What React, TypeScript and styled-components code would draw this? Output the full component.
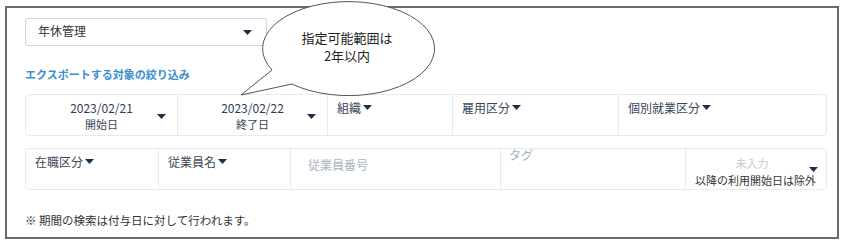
import styled, { createGlobalStyle } from "styled-components";

const GlobalStyle = createGlobalStyle`
  html, body {
    margin: 0;
    padding: 0;
    background: #ffffff;
  }
  body {
    font-family: "Noto Sans CJK JP", "Noto Sans", sans-serif;
    color: #333333;
  }
`;

function Caret() {
  return (
    <svg width="9" height="5" viewBox="0 0 9 5">
      <path d="M0 0 H9 L4.5 5 Z" fill="#1e2e48" />
    </svg>
  );
}

const firstRow = [
  { kind: "date", value: "2023/02/21", caption: "開始日" },
  { kind: "date", value: "2023/02/22", caption: "終了日" },
  { kind: "menu", label: "組織" },
  { kind: "menu", label: "雇用区分" },
  { kind: "menu", label: "個別就業区分" },
];

export default function App() {
  return (
    <>
      <GlobalStyle />
      <Frame>
        <Select>
          <span>年休管理</span>
          <Caret />
        </Select>

        <SectionTitle>エクスポートする対象の絞り込み</SectionTitle>

        <FilterRow $columns="151px 150px 125px 166px 1fr">
          {firstRow.map((cell, i) =>
            cell.kind === "date" ? (
              <DateCell key={i}>
                <DateText>
                  <DateValue>{cell.value}</DateValue>
                  <DateCaption>{cell.caption}</DateCaption>
                </DateText>
                <CaretSlot>
                  <Caret />
                </CaretSlot>
              </DateCell>
            ) : (
              <Cell key={i}>
                <MenuLabel>
                  {cell.label}
                  <Caret />
                </MenuLabel>
              </Cell>
            )
          )}
        </FilterRow>

        <FilterRow $columns="132px 132px 210px 185px 1fr">
          <Cell>
            <MenuLabel>
              在職区分
              <Caret />
            </MenuLabel>
          </Cell>
          <Cell>
            <MenuLabel>
              従業員名
              <Caret />
            </MenuLabel>
          </Cell>
          <InputCell>
            <Placeholder>従業員番号</Placeholder>
          </InputCell>
          <TagCell>
            <Placeholder>タグ</Placeholder>
          </TagCell>
          <UsageCell>
            <UsagePlaceholder>未入力</UsagePlaceholder>
            <UsageCaret>
              <Caret />
            </UsageCaret>
            <UsageNote>以降の利用開始日は除外</UsageNote>
          </UsageCell>
        </FilterRow>

        <Footnote>※ 期間の検索は付与日に対して行われます。</Footnote>

        <Callout>
          <svg width="210" height="100" viewBox="0 0 210 100">
            <path
              d="M37 70 L6 95 L57 84 A86 47 0 1 0 37 70 Z"
              fill="#ffffff"
              stroke="#555555"
              strokeWidth="1"
            />
          </svg>
          <CalloutText>
            <span>指定可能範囲は</span>
            <span>2年以内</span>
          </CalloutText>
        </Callout>
      </Frame>
    </>
  );
}

const Frame = styled.div`
  position: relative;
  box-sizing: border-box;
  width: 834px;
  height: 233px;
  margin: 6px 0 0 5px;
  padding: 10px 10px 0 18px;
  border: 2px solid #6a6a6a;
  display: flex;
  flex-direction: column;
`;

const Select = styled.div`
  box-sizing: border-box;
  width: 242px;
  height: 28px;
  padding: 0 14px 0 12px;
  border: 1px solid #c8d5e2;
  border-radius: 3px;
  display: flex;
  align-items: center;
  justify-content: space-between;
  font-size: 12px;
  line-height: 16px;
  color: #333333;

  span {
    margin-top: -2px;
  }
`;

const SectionTitle = styled.div`
  margin-top: 20px;
  font-size: 11px;
  line-height: 16px;
  font-weight: 700;
  color: #3b8fcf;
`;

const FilterRow = styled.div<{ $columns: string }>`
  box-sizing: border-box;
  margin-top: 12px;
  height: 42px;
  display: grid;
  grid-template-columns: ${(p) => p.$columns};
  border: 1px solid #e6ebf0;
  border-radius: 4px;
`;

const Cell = styled.div`
  box-sizing: border-box;
  padding: 5px 9px 0;
  border-left: 1px solid #e6ebf0;

  &:first-child {
    border-left: none;
  }
`;

const MenuLabel = styled.div`
  display: flex;
  align-items: center;
  gap: 2px;
  font-size: 12px;
  line-height: 16px;
  color: #3a4657;

  svg {
    margin-top: -2px;
  }
`;

const DateCell = styled(Cell)`
  display: flex;
  align-items: center;
  padding: 0 0 0 20px;
`;

const DateText = styled.div`
  flex: 1;
  display: flex;
  flex-direction: column;
  align-items: center;
  padding-top: 1px;
`;

const DateValue = styled.span`
  font-size: 12px;
  line-height: 16px;
  color: #2e3d52;
`;

const DateCaption = styled.span`
  font-size: 11px;
  line-height: 16px;
  color: #3a4657;
`;

const CaretSlot = styled.div`
  width: 20px;
  display: flex;
  justify-content: flex-start;
  padding-top: 2px;
`;

const InputCell = styled(Cell)`
  padding: 8px 17px 0;
`;

const TagCell = styled(Cell)`
  padding: 0 8px;

  div {
    line-height: 12px;
  }
`;

const Placeholder = styled.div`
  font-size: 12px;
  line-height: 16px;
  color: #a8b2be;
`;

const UsageCell = styled(Cell)`
  display: grid;
  grid-template-columns: 1fr 12px;
  grid-template-rows: 18px 1fr;
  grid-template-areas:
    "ph caret"
    "note note";
  padding: 6px 5px 0 9px;
`;

const UsagePlaceholder = styled.div`
  grid-area: ph;
  text-align: center;
  font-size: 11px;
  line-height: 16px;
  color: #c3cbd5;
`;

const UsageCaret = styled.div`
  grid-area: caret;
  display: flex;
  align-items: flex-end;
  padding-bottom: 1px;
`;

const UsageNote = styled.div`
  grid-area: note;
  font-size: 11px;
  line-height: 14px;
  color: #333333;
  white-space: nowrap;
`;

const Footnote = styled.div`
  margin-top: 22px;
  font-size: 11.5px;
  line-height: 16px;
  color: #333333;
`;

const Callout = styled.div`
  position: absolute;
  left: 228px;
  top: -8px;
  width: 210px;
  height: 100px;

  svg {
    position: absolute;
    inset: 0;
  }
`;

const CalloutText = styled.div`
  position: relative;
  display: flex;
  flex-direction: column;
  align-items: center;
  gap: 1px;
  padding: 29px 0 0 14px;
  font-size: 13px;
  line-height: 17px;
  color: #222222;
`;
